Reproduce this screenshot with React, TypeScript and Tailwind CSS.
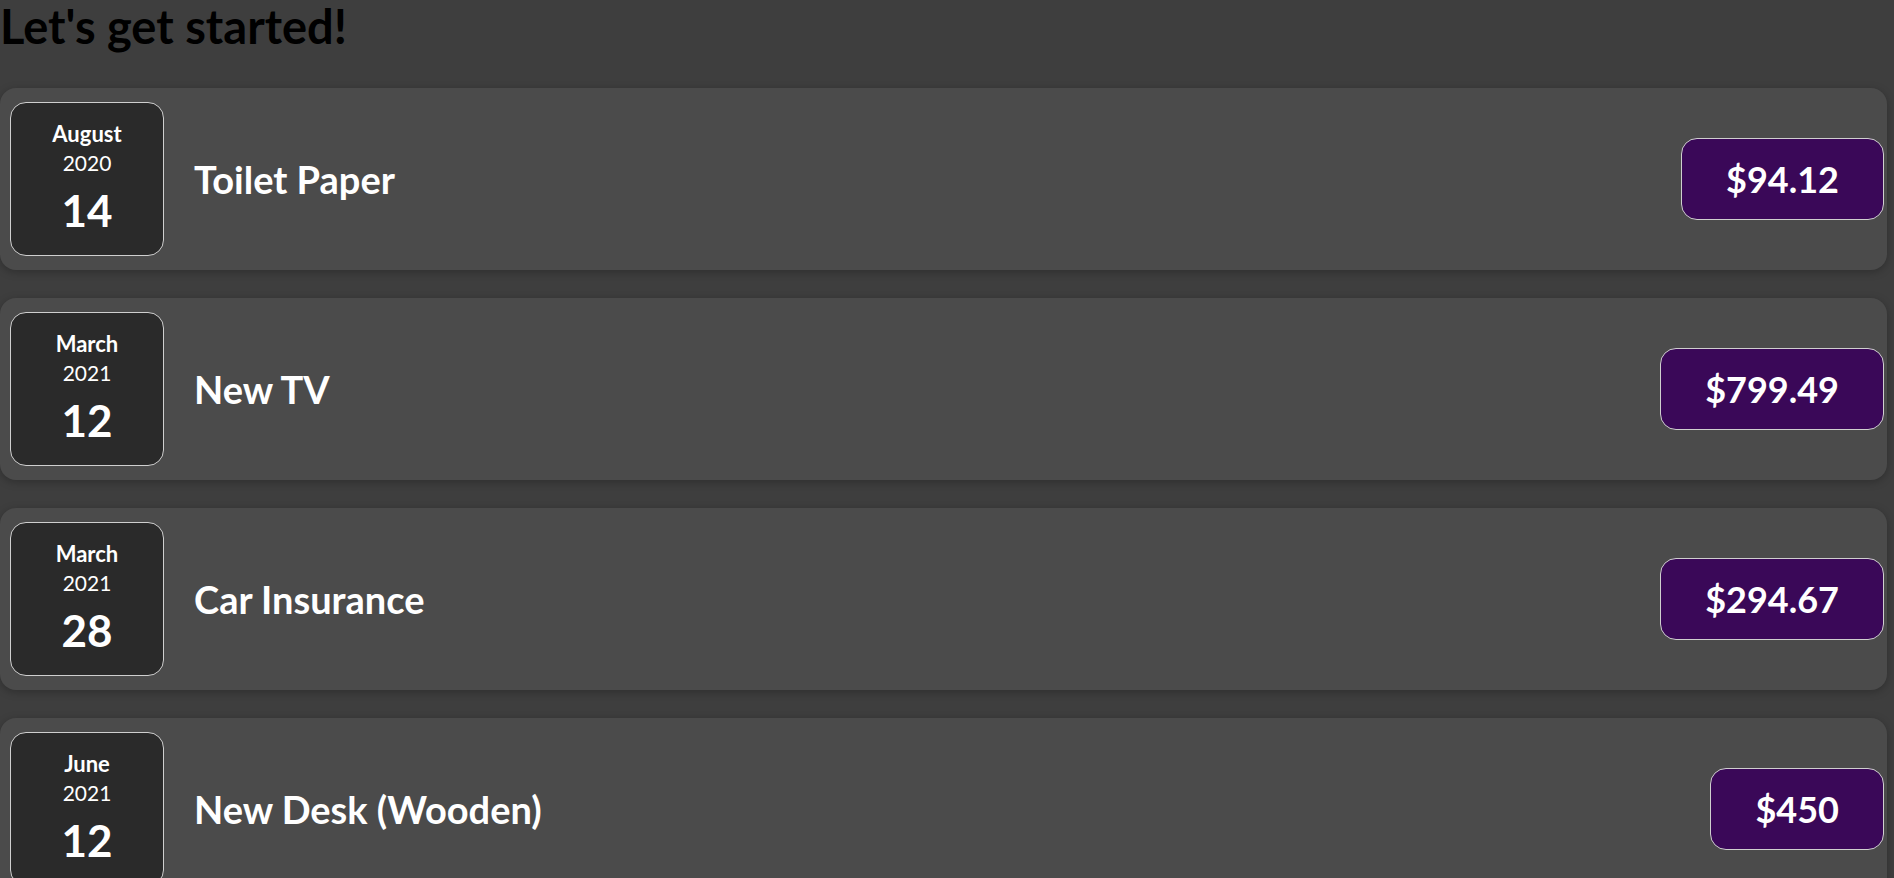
const expenses = [
  { month: "August", year: "2020", day: "14", title: "Toilet Paper", amount: "$94.12" },
  { month: "March", year: "2021", day: "12", title: "New TV", amount: "$799.49" },
  { month: "March", year: "2021", day: "28", title: "Car Insurance", amount: "$294.67" },
  { month: "June", year: "2021", day: "12", title: "New Desk (Wooden)", amount: "$450" },
];

function ExpenseDate({ month, year, day }: { month: string; year: string; day: string }) {
  return (
    <div className="flex flex-col items-center w-[154px] h-[154px] shrink-0 pt-[17px] rounded-[16px] border border-[#cfcfcf] bg-[#2a2a2a] text-white">
      <div className="text-[22px] font-bold leading-[28px]">{month}</div>
      <div className="text-[21px] leading-[30px]">{year}</div>
      <div className="mt-[4px] text-[44px] font-bold leading-[56px]">{day}</div>
    </div>
  );
}

export default function App() {
  return (
    <div
      className="w-full min-h-screen bg-[#3e3e3e] overflow-hidden"
      style={{ fontFamily: "Lato, 'Liberation Sans', sans-serif" }}
    >
      <h1 className="text-[47px] font-bold leading-[52px] text-black mb-[36px]">Let's get started!</h1>
      <div className="flex flex-col gap-[28px] pr-[7px]">
        {expenses.map((e) => (
          <div
            key={e.title}
            className="flex items-center h-[182px] pl-[10px] pr-[3px] rounded-[16px] bg-[#4b4b4b] shadow-[0_2px_8px_rgba(0,0,0,0.25)]"
          >
            <ExpenseDate month={e.month} year={e.year} day={e.day} />
            <div className="flex-1 pl-[30px] text-[38px] font-bold text-white">{e.title}</div>
            <div className="flex items-center h-[82px] px-[44px] rounded-[16px] border border-[#cfcfcf] bg-[#3a0858] text-[36px] font-bold text-white">
              {e.amount}
            </div>
          </div>
        ))}
      </div>
    </div>
  );
}
